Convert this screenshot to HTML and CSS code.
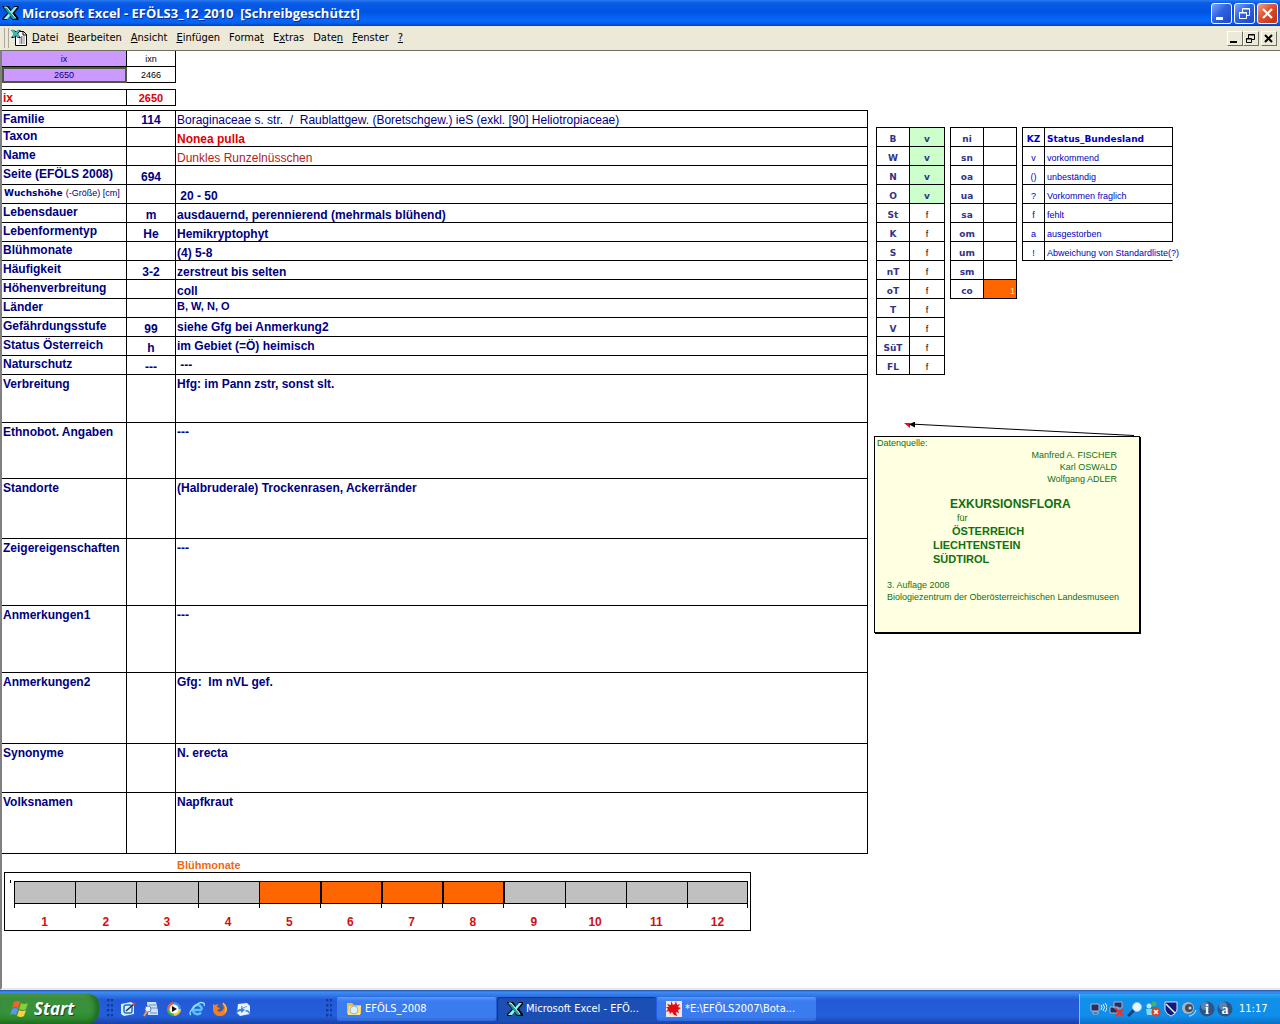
FILE: index.html
```html
<!DOCTYPE html>
<html lang="de">
  <head>
    <meta charset="UTF-8" />
    <meta name="viewport" content="width=device-width, initial-scale=1.0" />
    <title>Microsoft Excel - EFÖLS3_12_2010</title>
    <link rel="stylesheet" href="styles.css">
  </head>
  <body>
    <svg class="defs" width="0" height="0" aria-hidden="true">
      <symbol id="excel" viewBox="0 0 16 16">
        <path d="M0 1h6l3 4 3-4h4v2l-4 5 4 5v2h-6l-3-4-3 4H0v-2l5-5-5-6z" fill="#000" />
        <path d="M12 2h3L5 14H1z" fill="#8ff0ea" />
        <path d="M1 2h4l9 12h-4z" fill="#169c99" />
        <path d="M2 2h2l9 11" fill="none" stroke="#d8ffff" stroke-width="1" />
      </symbol>
    </svg>

    <header class="titlebar">
      <svg class="icon" width="17" height="16"><use href="#excel" /></svg>
      <h1>Microsoft Excel - EFÖLS3_12_2010&nbsp; [Schreibgeschützt]</h1>
      <div class="window-buttons">
        <button aria-label="Minimieren"><svg width="19" height="19"><path d="M4 13h7v3H4z" fill="#fff" /></svg></button>
        <button aria-label="Wiederherstellen"><svg width="19" height="19"><path d="M7.500 8V4.500h7v7H12M7 5h8M4.500 8.500h7v6h-7zM4 9h8" fill="none" stroke="#fff" /></svg></button>
        <button class="close" aria-label="Schließen"><svg width="19" height="19"><path d="M5 5l9 9M14 5l-9 9" stroke="#fff" stroke-width="2.200" /></svg></button>
      </div>
    </header>

    <nav class="menubar">
      <span class="grip"></span>
      <svg class="doc" width="18" height="18" viewBox="0 0 18 18">
        <path d="M4.500 2.500h8l3 3v11h-11z" fill="#fff" stroke="#000" />
        <path d="M12 2v4h4" fill="none" stroke="#000" />
        <path d="M10 8h4M8 10h6M8 12h6M8 14h6M10.500 7v8" stroke="#888" />
        <path d="M0 1h3l2 2 2-2h3L7 5l3 4H7L5 7 3 9H0l3-4z" fill="#000" />
        <path d="M1 1l7 7M8 1L2 8" stroke="#35c5bd" stroke-width="2" />
      </svg>
      <button><u>D</u>atei</button>
      <button><u>B</u>earbeiten</button>
      <button><u>A</u>nsicht</button>
      <button><u>E</u>infügen</button>
      <button>Forma<u>t</u></button>
      <button>E<u>x</u>tras</button>
      <button>Date<u>n</u></button>
      <button><u>F</u>enster</button>
      <button><u>?</u></button>
      <div class="doc-buttons">
        <button aria-label="Fenster minimieren"><svg width="13" height="13"><path d="M2 9h7v2H2z" /></svg></button>
        <button aria-label="Fenster wiederherstellen"><svg width="13" height="13"><path d="M4.500 6V2.500h6v5H8M4 3h7M2.500 6.500h5v4h-5zM2 7h6" fill="none" stroke="#000" /></svg></button>
        <button class="last" aria-label="Fenster schließen"><svg width="13" height="13"><path d="M3 3l7 7M10 3l-7 7" stroke="#000" stroke-width="2" /></svg></button>
      </div>
    </nav>

    <main class="sheet">
      <section class="record">
        <table class="grid index">
          <tr><td class="key">ix</td><td>ixn</td></tr>
          <tr><td class="key active">2650</td><td>2466</td></tr>
        </table>

        <table class="grid current">
          <tr><th scope="row">ix</th><td>2650</td></tr>
        </table>

        <table class="grid details">
          <colgroup><col class="c-label"><col class="c-code"><col></colgroup>
          <tr class="first"><th scope="row">Familie</th><td>114</td><td class="plain">Boraginaceae s. str.&nbsp; /&nbsp; Raublattgew. (Boretschgew.) ieS (exkl. [90] Heliotropiaceae)</td></tr>
          <tr><th scope="row">Taxon</th><td></td><td class="taxon">Nonea pulla</td></tr>
          <tr><th scope="row">Name</th><td></td><td class="name">Dunkles Runzelnüsschen</td></tr>
          <tr><th scope="row">Seite (EFÖLS 2008)</th><td>694</td><td></td></tr>
          <tr><th scope="row" class="small">Wuchshöhe <span>(-Größe) [cm]</span></th><td></td><td>&nbsp;20 - 50</td></tr>
          <tr><th scope="row">Lebensdauer</th><td>m</td><td>ausdauernd, perennierend (mehrmals blühend)</td></tr>
          <tr><th scope="row">Lebenformentyp</th><td>He</td><td>Hemikryptophyt</td></tr>
          <tr><th scope="row">Blühmonate</th><td></td><td>(4) 5-8</td></tr>
          <tr><th scope="row">Häufigkeit</th><td>3-2</td><td>zerstreut bis selten</td></tr>
          <tr><th scope="row">Höhenverbreitung</th><td></td><td>coll</td></tr>
          <tr><th scope="row">Länder</th><td></td><td class="regions">B, W, N, O</td></tr>
          <tr><th scope="row">Gefährdungsstufe</th><td>99</td><td class="mid">siehe Gfg bei Anmerkung2</td></tr>
          <tr><th scope="row">Status Österreich</th><td>h</td><td class="mid">im Gebiet (=Ö) heimisch</td></tr>
          <tr><th scope="row">Naturschutz</th><td>---</td><td class="mid">&nbsp;---</td></tr>
          <tr class="note-row h48"><th scope="row">Verbreitung</th><td></td><td>Hfg: im Pann zstr, sonst slt.</td></tr>
          <tr class="note-row h56"><th scope="row">Ethnobot. Angaben</th><td></td><td>---</td></tr>
          <tr class="note-row h60"><th scope="row">Standorte</th><td></td><td>(Halbruderale) Trockenrasen, Ackerränder</td></tr>
          <tr class="note-row h67"><th scope="row">Zeigereigenschaften</th><td></td><td>---</td></tr>
          <tr class="note-row h67"><th scope="row">Anmerkungen1</th><td></td><td>---</td></tr>
          <tr class="note-row h71"><th scope="row">Anmerkungen2</th><td></td><td>Gfg:&nbsp; Im nVL gef.</td></tr>
          <tr class="note-row h49"><th scope="row">Synonyme</th><td></td><td>N. erecta</td></tr>
          <tr class="note-row h61"><th scope="row">Volksnamen</th><td></td><td>Napfkraut</td></tr>
        </table>

        <h2 class="chart-title">Blühmonate</h2>
        <ol class="chart">
          <li><i></i>1</li>
          <li><i></i>2</li>
          <li><i></i>3</li>
          <li><i></i>4</li>
          <li class="on"><i></i>5</li>
          <li class="on"><i></i>6</li>
          <li class="on"><i></i>7</li>
          <li class="on"><i></i>8</li>
          <li class="after"><i></i>9</li>
          <li><i></i>10</li>
          <li><i></i>11</li>
          <li><i></i>12</li>
        </ol>
      </section>

      <aside class="side">
        <div class="tables">
          <table class="grid status states">
            <tr><th scope="row">B</th><td class="yes">v</td></tr>
            <tr><th scope="row">W</th><td class="yes">v</td></tr>
            <tr><th scope="row">N</th><td class="yes">v</td></tr>
            <tr><th scope="row">O</th><td class="yes">v</td></tr>
            <tr><th scope="row">St</th><td>f</td></tr>
            <tr><th scope="row">K</th><td>f</td></tr>
            <tr><th scope="row">S</th><td>f</td></tr>
            <tr><th scope="row">nT</th><td>f</td></tr>
            <tr><th scope="row">oT</th><td>f</td></tr>
            <tr><th scope="row">T</th><td>f</td></tr>
            <tr><th scope="row">V</th><td>f</td></tr>
            <tr><th scope="row">SüT</th><td>f</td></tr>
            <tr><th scope="row">FL</th><td>f</td></tr>
          </table>
          <table class="grid status levels">
            <tr><th scope="row">ni</th><td></td></tr>
            <tr><th scope="row">sn</th><td></td></tr>
            <tr><th scope="row">oa</th><td></td></tr>
            <tr><th scope="row">ua</th><td></td></tr>
            <tr><th scope="row">sa</th><td></td></tr>
            <tr><th scope="row">om</th><td></td></tr>
            <tr><th scope="row">um</th><td></td></tr>
            <tr><th scope="row">sm</th><td></td></tr>
            <tr><th scope="row">co</th><td class="mark">1</td></tr>
          </table>
          <table class="grid status legend">
            <tr><th scope="col">KZ</th><th scope="col">Status_Bundesland</th></tr>
            <tr><td>v</td><td>vorkommend</td></tr>
            <tr><td>()</td><td>unbeständig</td></tr>
            <tr><td>?</td><td>Vorkommen fraglich</td></tr>
            <tr><td>f</td><td>fehlt</td></tr>
            <tr><td>a</td><td>ausgestorben</td></tr>
            <tr class="open"><td>!</td><td>Abweichung von Standardliste(?)</td></tr>
          </table>
        </div>

        <svg class="arrow" width="267" height="14" viewBox="0 0 267 14">
          <path d="M30 1h6v5z" fill="#e01010" />
          <path d="M36 2L260 13.500" stroke="#000" />
          <path d="M35 2.500l6-3v6z" />
        </svg>
        <div class="comment">
          <p>Datenquelle:</p>
          <p class="authors">Manfred A. FISCHER<br>Karl OSWALD<br>Wolfgang ADLER</p>
          <div class="book">
            <p class="big">EXKURSIONSFLORA</p>
            <p class="for">für</p>
            <p class="country first">ÖSTERREICH</p>
            <p class="country">LIECHTENSTEIN</p>
            <p class="country">SÜDTIROL</p>
          </div>
          <p class="edition">3. Auflage 2008<br>Biologiezentrum der Oberösterreichischen Landesmuseen</p>
        </div>
      </aside>
    </main>

    <footer class="taskbar">
      <button class="start">
        <svg width="20" height="18" viewBox="0 0 20 18">
          <path d="M4 2q3-2 6 0L8 8Q5 6 2 8z" fill="#f0642c" />
          <path d="M11 3q3 2 7 0l-2 6q-3 2-7 0z" fill="#8ccb3a" />
          <path d="M2 9q3-2 6 0l-2 6q-3-2-6 0z" fill="#5a94f4" />
          <path d="M9 10q3 2 7 0l-2 6q-3 2-7 0z" fill="#fbd03c" />
        </svg>
        Start
      </button>
      <div class="quick">
        <span class="dots"></span>
        <button aria-label="Desktop anzeigen"><svg width="16" height="16" viewBox="0 0 16 16"><path d="M1 3l10-2 3 2v10l-10 2-3-2z" fill="#d9efff" /><rect x="4" y="4" width="8" height="8" rx="2" fill="none" stroke="#1b76c4" stroke-width="1.500" /><path d="M6 10l8-7" stroke="#234" stroke-width="1.500" /><path d="M13 4l2-2" stroke="#e43" stroke-width="2" /></svg></button>
        <button aria-label="Suche"><svg width="16" height="16" viewBox="0 0 16 16"><path d="M4 1h9l2 9v4H5z" fill="#cfe4fa" /><path d="M6 4h7M7 7h7M7 12h7" stroke="#6c8fc4" /><circle cx="5" cy="8" r="3" fill="#e9f6ff" stroke="#5b7fb9" /><path d="M4 10l-3 5" stroke="#f19a52" stroke-width="2" /></svg></button>
        <button aria-label="Media Player"><svg width="16" height="16" viewBox="0 0 16 16"><path d="M8 8V1a7 7 0 0 0-7 7z" fill="#ef5b2c" /><path d="M8 8h7a7 7 0 0 0-7-7z" fill="#3c8ee6" /><path d="M8 8H1a7 7 0 0 0 7 7z" fill="#4fb04a" /><path d="M8 8v7a7 7 0 0 0 7-7z" fill="#f9c531" /><circle cx="8" cy="8" r="4.500" fill="#fff" /><path d="M6 5l5 3-5 3z" fill="#111" /></svg></button>
        <button aria-label="Internet Explorer"><svg width="16" height="16" viewBox="0 0 16 16"><path d="M13 9H5M13 8.500a4.600 4.600 0 1 0-1 3" fill="none" stroke="#5cc1fb" stroke-width="2.500" /><path d="M2 14Q-1 12 5 6t9-4q2 0 1 3" fill="none" stroke="#9de0ff" stroke-width="1.300" /></svg></button>
        <button aria-label="Firefox"><svg width="16" height="16" viewBox="0 0 16 16"><circle cx="8" cy="8" r="6.500" fill="#3d5cae" /><path d="M1 3l2 1 3-1-1 3 3 1-3 3q3 2 6-1 2-3-1-6 5 1 5 6-1 6-7 6T1 9z" fill="#f5801f" /><path d="M11 2q5 4 2 9" fill="none" stroke="#ffc83d" stroke-width="1.500" /></svg></button>
        <button aria-label="Outlook Express"><svg width="16" height="16" viewBox="0 0 16 16"><path d="M3 3l9-1 3 3v8l-10 2-3-3z" fill="#e6f3ff" /><path d="M6 5l3 2 3-2" fill="none" stroke="#7a9cc9" /><path d="M1 13q0-5 5-5V6l4 3-4 3v-2q-3 0-5 3zM14 15q1-4-4-5l1-1q4 0 4 4z" fill="#2f86e0" /></svg></button>
      </div>
      <div class="tasks">
        <span class="dots"></span>
        <button><svg width="16" height="16" viewBox="0 0 16 16"><path d="M1 2h5l2 2h7v9H1z" fill="#f0b93b" /><path d="M3 5h12l-1 9H2z" fill="#ffe48c" /><circle cx="8" cy="9" r="4" fill="#d8f1fa" stroke="#8fb5c6" /></svg>EFÖLS_2008</button>
        <button class="pressed"><svg width="16" height="16"><use href="#excel" /></svg>Microsoft Excel - EFÖ...</button>
        <button><svg width="16" height="16" viewBox="0 0 16 16"><path d="M0 0h16v16H0z" fill="#f5e4e4" /><path d="M5 0l2 4 2-1 1-3 1 4 3-1-2 3 3 1-3 2 1 3-3-1 1 4-3-1-2-3-2 2-1-3-3 1 2-3-2-2 3 0-2-3 4 1z" fill="#e00c14" /></svg>*E:\EFÖLS2007\Bota...</button>
      </div>
      <div class="tray">
        <svg width="17" height="16" viewBox="0 0 17 16"><path d="M1 3h8v7H1zM3 11h5v2H3z" fill="#283060" stroke="#aab7d5" /><path d="M11 4q2 2 0 5M13 3q3 3 0 7M15 2q4 4 0 9" fill="none" stroke="#e8f4ff" /></svg>
        <svg width="16" height="16" viewBox="0 0 16 16"><path d="M5 1h8v6H5zM1 6h8v6H1z" fill="#26305e" stroke="#a5b3d0" /><path d="M7 8l7 7M14 8l-7 7" stroke="#ee3324" stroke-width="2" /></svg>
        <svg width="16" height="16" viewBox="0 0 16 16"><path d="M7 9l-6 6" stroke="#183c78" stroke-width="3" /><circle cx="10" cy="6" r="4.500" fill="#e6f7ff" stroke="#9cc6ec" /></svg>
        <svg width="16" height="16" viewBox="0 0 16 16"><circle cx="9" cy="3" r="2.500" fill="#41b36c" /><circle cx="4" cy="5" r="2.500" fill="#b3eaf5" /><path d="M6 6h6v7H6z" fill="#1f8e67" /><path d="M1 8h6v6H2z" fill="#8bd7ec" /><circle cx="11" cy="11" r="4.500" fill="#df3f22" /><path d="M9 9l4 4M13 9l-4 4" stroke="#fff" stroke-width="1.500" /></svg>
        <svg width="16" height="16" viewBox="0 0 16 16"><path d="M2 1h12v8q-1 4-6 6-5-2-6-6z" fill="#101b7c" stroke="#dce5fa" /><path d="M3 3l9 9" stroke="#e5edff" stroke-width="1.500" /></svg>
        <svg width="16" height="16" viewBox="0 0 16 16"><circle cx="7" cy="7" r="6" fill="#aab2ba" /><circle cx="8" cy="7" r="4" fill="#464e59" /><circle cx="9" cy="7" r="1.500" fill="#c9d3dc" /><path d="M11 14q3-1 4-5M8 15q2 0 3-1" fill="none" stroke="#cde6ff" /></svg>
        <svg width="16" height="16" viewBox="0 0 16 16"><circle cx="8" cy="8" r="7.500" fill="#2d5483" /><circle cx="6" cy="5" r="4" fill="#5c83ad" /><text x="8" y="13" class="glyph">i</text></svg>
        <svg width="16" height="16" viewBox="0 0 16 16"><circle cx="8" cy="8" r="7.500" fill="#2d5483" /><circle cx="6" cy="5" r="4" fill="#5c83ad" /><text x="8" y="13" class="glyph">a</text></svg>
        <time>11:17</time>
      </div>
    </footer>
  </body>
</html>
```
FILE: styles.css
```css
* {
  box-sizing: border-box;
}

body {
  margin: 0;
  min-height: 100vh;
  display: flex;
  flex-direction: column;
  background: #fff;
  font-family: "Liberation Sans", Arial, sans-serif;
  font-size: 12px;
  line-height: 14px;
}

h1,
h2,
p {
  margin: 0;
}

button {
  border: 0;
  padding: 0;
  background: none;
  font: inherit;
  color: inherit;
}

svg {
  display: block;
  flex: none;
}

.defs {
  position: absolute;
}

/* title bar */
.titlebar {
  display: flex;
  align-items: center;
  gap: 3px;
  height: 26px;
  padding: 0 2px;
  color: #fff;
  background: linear-gradient(#2a7cf0 0, #0a5be6 3px, #0054e3 12px, #0568fb 20px, #0560f0 23px, #0340b8 26px);
}

.titlebar h1 {
  flex: 1;
  font-family: "Open Sans", sans-serif;
  font-size: 13px;
  font-weight: 700;
  text-shadow: 1px 1px 0 #0a2a80;
}

.window-buttons {
  display: flex;
  gap: 2px;
}

.window-buttons button {
  width: 21px;
  height: 21px;
  border: 1px solid #fff;
  border-radius: 3px;
  background: linear-gradient(135deg, #7ca6f8, #2f62e0 45%, #1c49c8);
}

.window-buttons .close {
  background: linear-gradient(135deg, #f0a189, #db5230 45%, #b93013);
}

/* menu */
.menubar {
  display: flex;
  align-items: center;
  gap: 9px;
  height: 24px;
  padding: 0 3px 0 4px;
  background: #ece9d8;
  font-family: "DejaVu Sans Condensed", "DejaVu Sans", sans-serif;
  font-size: 11px;
}

.grip {
  width: 5px;
  height: 20px;
  border: solid #aca899;
  border-width: 0 1px;
  margin-right: -7px;
}

.doc {
  margin-right: -6px;
}

.doc-buttons {
  display: flex;
  margin-left: auto;
}

.doc-buttons button {
  width: 16px;
  height: 15px;
  border: 1px solid;
  border-color: #fff #716f64 #716f64 #fff;
  background: #ece9d8;
}

.doc-buttons .last {
  margin-left: 2px;
}

/* sheet */
.sheet {
  flex: 1;
  display: grid;
  grid-template-columns: minmax(0, 1fr) 406px;
  gap: 6px;
  border-left: 2px solid #808080;
  border-top: 1px solid #716f64;
  border-bottom: 2px solid #ece9d8;
  color: #000080;
}

.grid {
  border-collapse: separate;
  border-spacing: 0;
  table-layout: fixed;
}

.grid th,
.grid td {
  height: 19px;
  padding: 0 2px;
  border: solid #000;
  border-width: 0 1px 1px 0;
  text-align: left;
  font-weight: 700;
}

.index,
.current {
  width: 174px;
}

.index td {
  height: 16px;
  width: 49px;
  line-height: 12px;
  font-size: 9px;
  font-weight: 400;
  color: #000;
  text-align: center;
}

.index .key {
  width: 125px;
  background: #cc99ff;
  color: #000080;
}

.index .active {
  outline: 2px solid #4a5a3a;
  outline-offset: -2px;
}

.current {
  margin: 6px 0 4px;
  border-top: 1px solid #000;
  color: #e00000;
}

.current th,
.current td {
  height: 16px;
}

.current th {
  width: 125px;
  padding: 0 1px;
}

.current td {
  width: 49px;
  font-size: 11px;
  text-align: center;
}

.details {
  width: 100%;
  border-top: 1px solid #000;
}

.c-label {
  width: 125px;
}

.c-code {
  width: 49px;
}

.details th {
  padding: 1px 1px 0;
  vertical-align: top;
  white-space: nowrap;
}

.details td {
  vertical-align: bottom;
}

.details td:nth-child(2) {
  text-align: center;
}

.details td:nth-child(3) {
  padding: 0 1px;
}

.details .first th,
.details .first td {
  height: 17px;
}

.details .small {
  padding: 1px 2px 0;
  font-family: "DejaVu Sans", sans-serif;
  font-size: 9px;
}

.small span {
  font-family: "Liberation Sans", Arial, sans-serif;
  font-weight: 400;
}

.details .plain,
.details .name {
  padding: 0 2px;
  font-weight: 400;
}

.details .taxon {
  color: #e00000;
}

.details .name {
  color: #b22222;
}

.details .regions {
  font-size: 11px;
  vertical-align: top;
}

.details .mid {
  vertical-align: middle;
}

.details .note-row th,
.details .note-row td {
  padding-top: 2px;
  vertical-align: top;
}

.details .h48 td { height: 48px; }
.details .h49 td { height: 49px; }
.details .h56 td { height: 56px; }
.details .h60 td { height: 60px; }
.details .h61 td { height: 61px; }
.details .h67 td { height: 67px; }
.details .h71 td { height: 71px; }

/* flowering months */
.chart-title {
  margin: 4px 0 0 175px;
  font-size: 11px;
  color: #ee6a10;
}

.chart {
  position: relative;
  display: grid;
  grid-template-columns: repeat(12, 1fr);
  max-width: 747px;
  height: 59px;
  margin: 0 0 0 2px;
  padding: 8px 2px 0 9px;
  border: 1px solid #000;
  list-style: none;
  font-size: 12px;
  font-weight: 700;
  color: #d01010;
  text-align: center;
}

/* value axis stub */
.chart::before {
  content: "";
  position: absolute;
  top: 7px;
  left: 5px;
  width: 1px;
  height: 3px;
  background: #000;
}

.chart i {
  display: block;
  height: 23px;
  margin-bottom: 11px;
  border: solid #000;
  border-width: 1px 0 1px 1px;
  background: #c0c0c0;
}

.chart li {
  position: relative;
}

.chart li:last-child i {
  border-right-width: 1px;
}

/* axis ticks */
.chart li::before,
.chart li:last-child::after {
  content: "";
  position: absolute;
  top: 23px;
  left: 0;
  width: 1px;
  height: 4px;
  background: #000;
}

.chart li:last-child::after {
  left: auto;
  right: 0;
}

.chart .on i {
  background: #ff6600;
}

.chart .on + .on i,
.chart .after i {
  border-left-width: 2px;
}

/* status tables */
.side {
  padding-top: 76px;
}

.tables {
  display: flex;
  align-items: flex-start;
  gap: 5px;
  margin-left: 2px;
}

.status {
  border: solid #000;
  border-width: 1px 0 0 1px;
  width: 69px;
}

.status th,
.status td {
  padding: 4px 1px 0;
  line-height: 12px;
  vertical-align: middle;
  text-align: center;
}

.status th {
  font-family: "DejaVu Sans", sans-serif;
  font-size: 9px;
}

.states th,
.levels th {
  width: 33px;
  color: #333388;
}

.status td {
  font-size: 9px;
  font-weight: 400;
}

.states td {
  width: 35px;
  color: #000;
}

.states .yes {
  background: #ccffcc;
  font-family: "DejaVu Sans", sans-serif;
  font-weight: 700;
  color: #333388;
}

.levels {
  width: 67px;
}

.levels .mark {
  background: #ff6600;
  color: #ffe0a0;
  text-align: right;
}

.legend {
  width: 151px;
  color: #0000c0;
}

.legend th:first-child {
  width: 22px;
}

.legend tr > :last-child {
  padding-left: 2px;
  text-align: left;
  white-space: nowrap;
}

.legend .open td:last-child {
  border-right-color: transparent;
}

/* cell comment */
.arrow {
  margin-top: 47px;
}

.comment {
  width: 266px;
  height: 197px;
  padding: 0 2px;
  border: 1px solid #000;
  box-shadow: 1px 1px 0 #000;
  background: #ffffe1;
  color: #107010;
  font-size: 9px;
  line-height: 12px;
}

.authors {
  padding-right: 20px;
  text-align: right;
}

.book {
  margin: 11px 0 13px 56px;
  font-weight: 700;
}

.book .big {
  padding-left: 17px;
  font-size: 12px;
  line-height: 16px;
}

.book .for {
  padding-left: 24px;
  font-weight: 400;
}

.book .country {
  font-size: 11px;
  line-height: 14px;
}

.book .country.first {
  padding-left: 19px;
}

.edition {
  padding-left: 10px;
}

/* taskbar */
.taskbar {
  display: flex;
  align-items: stretch;
  height: 34px;
  background: linear-gradient(#1c50b8 0, #3f8cf3 2px, #2f74e4 6px, #2359d6 10px, #245edb 26px, #1941a5 34px);
  color: #fff;
  font-family: "DejaVu Sans Condensed", "DejaVu Sans", sans-serif;
  font-size: 11px;
}

.start {
  display: flex;
  align-items: center;
  gap: 4px;
  width: 99px;
  margin-top: 4px;
  padding-left: 10px;
  border-radius: 0 10px 12px 0;
  background: linear-gradient(#5eac56 0, #3c8f3c 4px, #37923a 18px, #2f8b2f 24px, #1f6f22);
  box-shadow: inset -4px 0 5px #1f6a24;
  font-family: "Open Sans", sans-serif;
  font-size: 17px;
  font-style: italic;
  font-weight: 700;
  text-shadow: 1px 1px 1px #1d3d1d;
}

.quick {
  display: flex;
  align-items: center;
  gap: 7px;
  width: 227px;
  padding: 4px 0 0 8px;
}

.dots {
  width: 6px;
  height: 20px;
  background: radial-gradient(circle at 1px 1px, #123a9c 1px, transparent 2px) 0 0 / 4px 5px;
}

.tasks {
  display: flex;
  align-items: center;
  gap: 1px;
  flex: 1;
  padding-top: 4px;
}

.tasks .dots {
  margin-right: 4px;
}

.tasks button {
  display: flex;
  align-items: center;
  gap: 3px;
  width: 159px;
  height: 24px;
  padding-left: 9px;
  border-radius: 2px;
  background: linear-gradient(#5a9bff, #3b7cf0 4px, #3a7bee 20px, #2f68d6);
}

.tasks .pressed {
  padding-left: 10px;
  background: #1c4fb4;
  box-shadow: inset 1px 1px 1px #10358a;
}

.tray {
  display: flex;
  align-items: center;
  gap: 2px;
  width: 201px;
  margin-top: 4px;
  padding-left: 10px;
  border-left: 1px solid #5fd2ff;
  background: linear-gradient(#2aa8f4, #1290e8 5px, #0f8eea 22px, #0c6cc4);
}

.tray time {
  margin-left: 4px;
}

.glyph {
  fill: #fff;
  font-family: "Liberation Serif", serif;
  font-size: 14px;
  font-weight: 700;
  text-anchor: middle;
}
```
